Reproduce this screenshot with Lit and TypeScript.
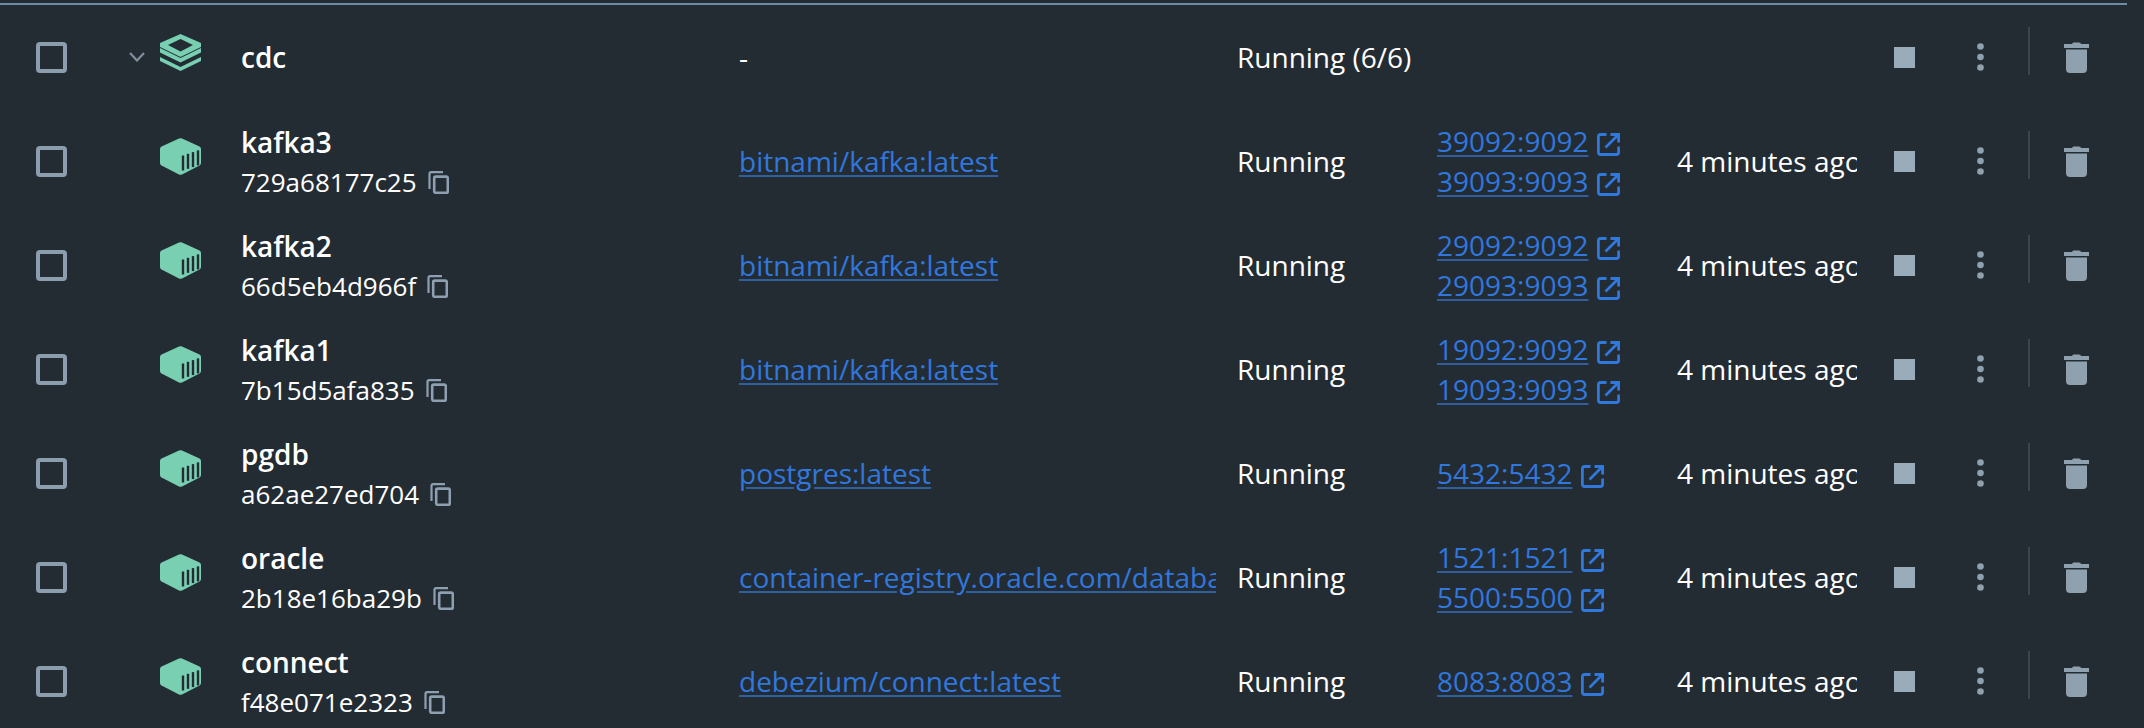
import { LitElement, html, css, svg } from "lit";
import { customElement } from "lit/decorators.js";

const rows = [
  { name: "kafka3", id: "729a68177c25", image: "bitnami/kafka:latest", ports: ["39092:9092", "39093:9093"] },
  { name: "kafka2", id: "66d5eb4d966f", image: "bitnami/kafka:latest", ports: ["29092:9092", "29093:9093"] },
  { name: "kafka1", id: "7b15d5afa835", image: "bitnami/kafka:latest", ports: ["19092:9092", "19093:9093"] },
  { name: "pgdb", id: "a62ae27ed704", image: "postgres:latest", ports: ["5432:5432"] },
  { name: "oracle", id: "2b18e16ba29b", image: "container-registry.oracle.com/database/enterprise:latest", ports: ["1521:1521", "5500:5500"] },
  { name: "connect", id: "f48e071e2323", image: "debezium/connect:latest", ports: ["8083:8083"] },
];

const G = "#78cfb1";
const stack = html`<svg class="kind" viewBox="0 0 41 37" width="41" height="37">
  <path d="M20.5 0 L41 9 V13 L20.5 23 L0 13 V9 Z M20.5 5 L8 11 L20.5 17.5 L33 11 Z" fill=${G} fill-rule="evenodd"/>
  <path d="M0 14 L20.5 24 L41 14 V18.5 L20.5 28.5 L0 18.5 Z" fill=${G}/>
  <path d="M0 23 L20.5 33 L41 23 V27 L20.5 37 L0 27 Z" fill=${G}/>
</svg>`;
const box = html`<svg class="kind" viewBox="0 0 41 37" width="41" height="37">
  <path d="M19 .6 Q20.5 0 22 .6 L39.5 8.6 Q41 9.4 41 11 V25 Q41 26.6 39.5 27.4 L22 36.4 Q20.5 37 19 36.4 L1.5 27.4 Q0 26.6 0 25 V11 Q0 9.4 1.5 8.6 Z" fill=${G}/>
  ${[23, 28, 33, 38].map((x, i) => svg`<rect x=${x - 1.2} y=${17.5 - i * 1.7} width="2.4" height="15" fill="#242c33"/>`)}
</svg>`;
const copy = html`<svg class="copy" viewBox="0 0 21 23" width="21" height="23">
  <path d="M1.5 18 V3 Q1.5 1.2 3.2 1.2 H15" fill="none" stroke="#8d9fb0" stroke-width="2.2"/>
  <rect x="6.2" y="5.6" width="13.6" height="16.2" rx="1.5" fill="none" stroke="#8d9fb0" stroke-width="2.6"/>
</svg>`;
const ext = html`<svg class="ext" viewBox="0 0 23 23" width="23" height="23">
  <path d="M9.5 1.5 H3.6 Q1.4 1.5 1.4 3.7 V19.3 Q1.4 21.5 3.6 21.5 H19.4 Q21.6 21.5 21.6 19.3 V13.5" fill="none" stroke="#3077de" stroke-width="2.8"/>
  <path d="M13.5 1.5 H21.6 V9.5 M21 2 L8.5 14.5" fill="none" stroke="#3077de" stroke-width="2.8"/>
</svg>`;
const caret = html`<svg class="caret" viewBox="0 0 16 10" width="16" height="10"><path d="M1 1 L8 8.5 L15 1" fill="none" stroke="#7f8e9c" stroke-width="2.2"/></svg>`;
const dots = html`<svg class="dots" viewBox="0 0 7 28" width="7" height="28"><circle cx="3.5" cy="3.5" r="3.3"/><circle cx="3.5" cy="14" r="3.3"/><circle cx="3.5" cy="24.5" r="3.3"/></svg>`;
const trash = html`<svg class="trash" viewBox="0 0 25 31" width="25" height="31">
  <path d="M8 2 Q8 .5 10 .5 H15 Q17 .5 17 2 H25 V6 H0 V2 Z"/>
  <path d="M2 7.5 H23 V27 Q23 31 19 31 H6 Q2 31 2 27 Z"/>
</svg>`;

@customElement("app-root")
export class AppRoot extends LitElement {
  static styles = css`
    :host { display: block; width: 2144px; height: 728px; overflow: hidden; background: #242c33; font-family: "Open Sans", sans-serif; font-size: 28px; color: #fff; }
    .top { height: 2px; margin: 3px 17px 0 0; background: #6c8ca3; }
    .row { display: grid; height: 104px; align-items: center; grid-template-columns: 128px 32px 81px 498px 498px 200px 240px 180px 1fr; }
    .cb { width: 31px; height: 31px; box-sizing: border-box; border: 4px solid #8c9dad; border-radius: 4px; margin-left: 36px; }
    .caret { display: block; margin-left: 1px; }
    .kind { display: block; margin-top: -9px; }
    .name { font-weight: 600; line-height: 39px; }
    .id { display: flex; align-items: center; gap: 11px; line-height: 39px; margin-top: 1px; font-size: 26px; }
    .copy { display: block; }
    .label { position: relative; top: 1px; }
    .image { overflow: hidden; white-space: nowrap; margin-right: 21px; }
    a { color: #3077de; text-decoration: underline; text-decoration-color: #2f5f9f; text-underline-offset: 3px; }
    .ports { display: flex; flex-direction: column; gap: 1px; }
    .port { display: flex; align-items: center; gap: 9px; line-height: 39px; }
    .ext { position: relative; top: 3px; }
    .time { overflow: hidden; white-space: nowrap; }
    .actions { display: flex; align-items: center; margin-left: 37px; }
    .stop { width: 21px; height: 21px; background: #9aabba; }
    .dots { display: block; margin-left: 62px; fill: #8fa0af; }
    .sep { width: 2px; height: 48px; background: #3a454f; margin: -16px 0 -4px 44px; }
    .trash { display: block; margin-left: 34px; fill: #8fa0af; }
  `;

  actions() {
    return html`<div class="actions"><div class="stop"></div>${dots}<div class="sep"></div>${trash}</div>`;
  }

  render() {
    return html`
      <div class="top"></div>
      <div class="row">
        <div class="cb"></div>
        ${caret}
        ${stack}
        <div class="name">cdc</div>
        <div>-</div>
        <div>Running (6/6)</div>
        <div></div>
        <div></div>
        ${this.actions()}
      </div>
      ${rows.map((r) => html`
        <div class="row">
          <div class="cb"></div>
          <div></div>
          ${box}
          <div class="label">
            <div class="name">${r.name}</div>
            <div class="id">${r.id}${copy}</div>
          </div>
          <div class="image"><a>${r.image}</a></div>
          <div>Running</div>
          <div class="ports">${r.ports.map((p) => html`<div class="port"><a>${p}</a>${ext}</div>`)}</div>
          <div class="time">4 minutes ago</div>
          ${this.actions()}
        </div>`)}
    `;
  }
}
